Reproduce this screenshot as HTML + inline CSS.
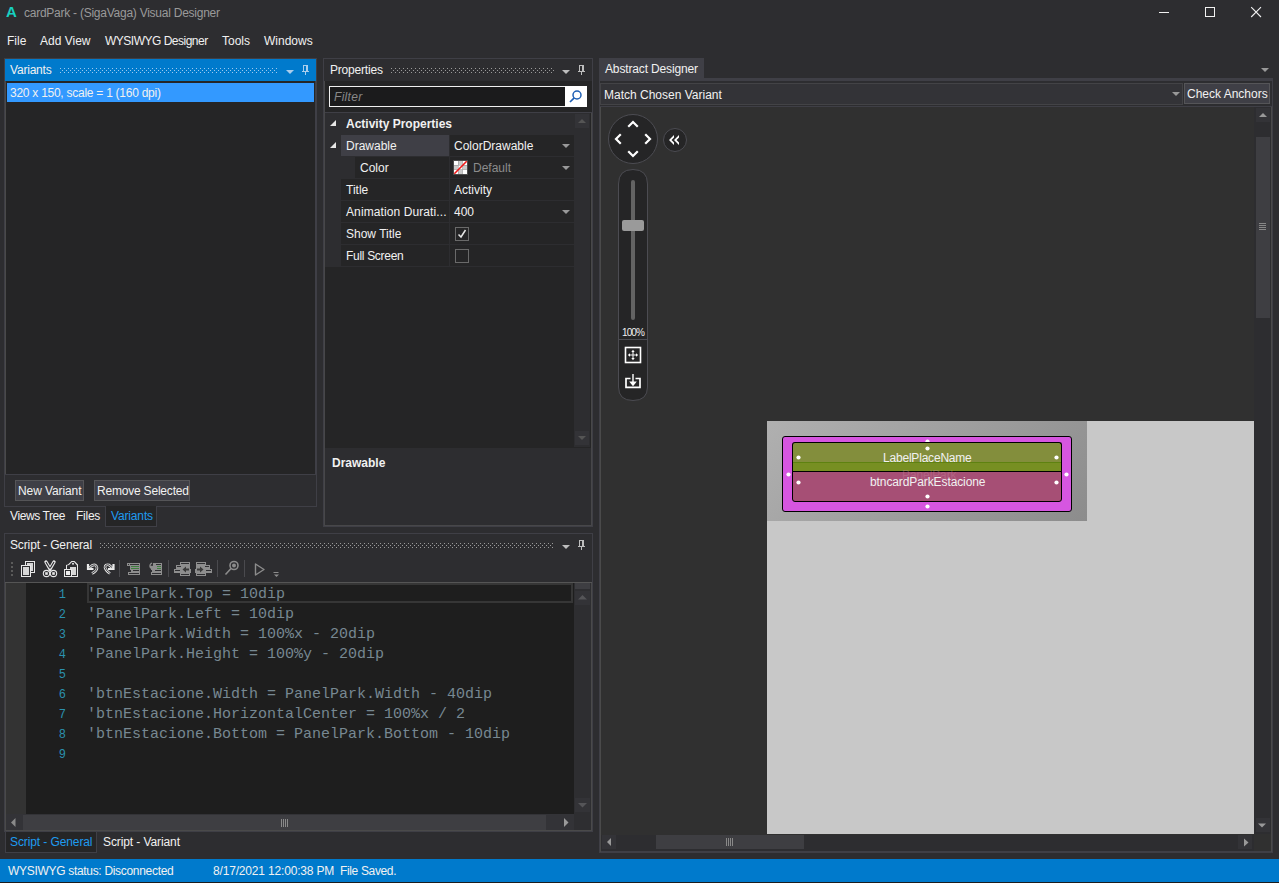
<!DOCTYPE html>
<html><head><meta charset="utf-8">
<style>
*{margin:0;padding:0;box-sizing:border-box}
html,body{width:1279px;height:883px;overflow:hidden;background:#2d2d30}
body{position:relative;font-family:"Liberation Sans",sans-serif;font-size:12px;color:#f1f1f1;line-height:14px}
.a{position:absolute}
.t{position:absolute;white-space:nowrap;line-height:14px}
.grip{position:absolute;height:5px;background-image:radial-gradient(circle at 1px 1px,rgba(160,160,160,.55) 0.7px,transparent 0.8px);background-size:4px 4px}
.bd{border:1px solid #3f3f46}
</style></head><body>

<!-- ===== TITLE BAR ===== -->
<div class="t" style="left:6px;top:3px;font-size:15px;font-weight:bold;color:#18d0c0;line-height:17px">A</div>
<div class="t" style="left:24px;top:6px;color:#9a9a9a;letter-spacing:-0.25px">cardPark - (SigaVaga) Visual Designer</div>
<div class="a" style="left:1159px;top:12px;width:10px;height:1px;background:#f1f1f1"></div>
<div class="a" style="left:1205px;top:7px;width:10px;height:10px;border:1px solid #f1f1f1"></div>
<svg class="a" style="left:1250px;top:6px" width="13" height="13"><path d="M1.2 1.2L11 11M11 1.2L1.2 11" stroke="#f1f1f1" stroke-width="1.1"/></svg>

<!-- ===== MENU ===== -->
<div class="t" style="left:7px;top:34px">File</div>
<div class="t" style="left:40px;top:34px">Add View</div>
<div class="t" style="left:105px;top:34px;letter-spacing:-0.5px">WYSIWYG Designer</div>
<div class="t" style="left:222px;top:34px">Tools</div>
<div class="t" style="left:264px;top:34px">Windows</div>

<!-- ===== VARIANTS PANEL ===== -->
<div class="a" style="left:4px;top:58px;width:313px;height:449px;border:1px solid #3f3f46;background:#2d2d30"></div>
<div class="a" style="left:5px;top:59px;width:311px;height:22px;background:#007acc"></div>
<div class="t" style="left:10px;top:63px;letter-spacing:-0.2px">Variants</div>
<svg class="a" style="left:60px;top:68px" width="217" height="5" shape-rendering="crispEdges"><defs><pattern id="g60_68" width="4" height="4" patternUnits="userSpaceOnUse"><rect x="0" y="0" width="1" height="1" fill="#9dc9ee"/><rect x="2" y="2" width="1" height="1" fill="#9dc9ee"/></pattern></defs><rect width="217" height="5" fill="url(#g60_68)"/></svg>
<svg class="a" style="left:286px;top:70px" width="8" height="4"><path d="M0 0H8L4 4Z" fill="#a9cdec"/></svg>
<svg class="a" style="left:302px;top:65px" width="8" height="11" shape-rendering="crispEdges" fill="#a9cdec"><rect x="1" y="0" width="1" height="7"/><rect x="4" y="0" width="2" height="7"/><rect x="1" y="0" width="5" height="1"/><rect x="0" y="6" width="7" height="1"/><rect x="3" y="7" width="1" height="3"/></svg>
<div class="a" style="left:5px;top:81px;width:311px;height:393px;background:#252526;border:1px solid #3f3f46;border-top:none;border-bottom:none"></div>
<div class="a" style="left:7px;top:83px;width:307px;height:19px;background:#3399ff"></div>
<div class="t" style="left:10px;top:86px;letter-spacing:-0.26px">320 x 150, scale = 1 (160 dpi)</div>
<div class="a" style="left:4px;top:474px;width:313px;height:33px;border:1px solid #3f3f46;border-top:1px solid #3f3f46"></div>
<div class="a" style="left:15px;top:480px;width:69px;height:21px;background:#3f3f46;border:1px solid #555558"></div>
<div class="t" style="left:18px;top:484px;letter-spacing:-0.1px">New Variant</div>
<div class="a" style="left:94px;top:480px;width:96px;height:21px;background:#3f3f46;border:1px solid #555558"></div>
<div class="t" style="left:97px;top:484px;letter-spacing:-0.2px">Remove Selected</div>
<!-- tabs -->
<div class="a" style="left:105px;top:506px;width:52px;height:21px;background:#252526;border:1px solid #3f3f46;border-top:none"></div>
<div class="t" style="left:10px;top:509px;letter-spacing:-0.4px">Views Tree</div>
<div class="t" style="left:76px;top:509px;letter-spacing:-0.25px">Files</div>
<div class="t" style="left:111px;top:509px;color:#1e9bf0;letter-spacing:-0.15px">Variants</div>

<!-- ===== PROPERTIES PANEL ===== -->
<div class="a" style="left:323px;top:58px;width:270px;height:469px;border:1px solid #3f3f46"></div>
<div class="t" style="left:330px;top:63px;letter-spacing:-0.2px">Properties</div>
<svg class="a" style="left:391px;top:68px" width="163" height="5" shape-rendering="crispEdges"><defs><pattern id="g391_68" width="4" height="4" patternUnits="userSpaceOnUse"><rect x="0" y="0" width="1" height="1" fill="#9a9a9a"/><rect x="2" y="2" width="1" height="1" fill="#9a9a9a"/></pattern></defs><rect width="163" height="5" fill="url(#g391_68)"/></svg>
<svg class="a" style="left:562px;top:70px" width="8" height="4"><path d="M0 0H8L4 4Z" fill="#bdbdbd"/></svg>
<svg class="a" style="left:578px;top:65px" width="8" height="11" shape-rendering="crispEdges" fill="#bdbdbd"><rect x="1" y="0" width="1" height="7"/><rect x="4" y="0" width="2" height="7"/><rect x="1" y="0" width="5" height="1"/><rect x="0" y="6" width="7" height="1"/><rect x="3" y="7" width="1" height="3"/></svg>
<div class="a" style="left:324px;top:81px;width:268px;height:31px;background:#252526"></div>
<div class="a" style="left:329px;top:86px;width:258px;height:21px;background:#1b1b1c;border:1px solid #f0f0f0"></div>
<div class="a" style="left:565px;top:86px;width:22px;height:21px;background:#fff"></div>
<svg class="a" style="left:567px;top:88px" width="18" height="17"><circle cx="10" cy="7" r="4" fill="none" stroke="#1e5fb4" stroke-width="1.5"/><path d="M7.2 9.8L3 14" stroke="#1e5fb4" stroke-width="1.7"/></svg>
<div class="t" style="left:334px;top:90px;font-style:italic;color:#888;letter-spacing:0.3px">Filter</div>
<!-- property grid -->
<div class="a" style="left:324px;top:112px;width:268px;height:336px;background:#252526;border-top:1px solid #3f3f46"></div>
<div class="a" style="left:325px;top:113px;width:249px;height:154px;background:#2d2d30"></div>
<div class="a" style="left:324px;top:112px;width:1px;height:336px;background:#4a4a4a"></div>
<div class="a" style="left:574px;top:113px;width:16px;height:334px;background:#2d2d30"></div>
<div class="a" style="left:575px;top:114px;width:14px;height:14px;background:#333337"></div>
<svg class="a" style="left:577px;top:118px" width="10" height="6"><path d="M1 5H9L5 1Z" fill="#555"/></svg>
<div class="a" style="left:575px;top:431px;width:14px;height:14px;background:#333337"></div>
<svg class="a" style="left:577px;top:435px" width="10" height="6"><path d="M1 1H9L5 5Z" fill="#555"/></svg>
<svg class="a" style="left:330px;top:120px" width="7" height="7"><path d="M6 0V6H0Z" fill="#e6e6e6"/></svg>
<div class="t" style="left:346px;top:117px;font-weight:bold">Activity Properties</div>
<!-- rows -->
<div class="a" style="left:341px;top:135px;width:108px;height:21px;background:#3f3f46"></div>
<div class="a" style="left:450px;top:135px;width:124px;height:21px;background:#252526"></div>
<svg class="a" style="left:330px;top:142px" width="7" height="7"><path d="M6 0V6H0Z" fill="#e6e6e6"/></svg>
<div class="t" style="left:346px;top:139px">Drawable</div>
<div class="t" style="left:454px;top:139px">ColorDrawable</div>
<svg class="a" style="left:561px;top:143px" width="10" height="6"><path d="M1 1H9L5 5Z" fill="#999"/></svg>

<div class="a" style="left:355px;top:157px;width:94px;height:21px;background:#252526"></div>
<div class="a" style="left:450px;top:157px;width:124px;height:21px;background:#252526"></div>
<div class="t" style="left:360px;top:161px">Color</div>
<svg class="a" style="left:453px;top:160px" width="15" height="15"><rect x="0.5" y="0.5" width="14" height="14" fill="none" stroke="#4a4a4a"/><rect x="1.00" y="1.00" width="4.34" height="4.34" fill="#fff"/><rect x="5.33" y="1.00" width="4.34" height="4.34" fill="#cbcbcb"/><rect x="9.67" y="1.00" width="4.34" height="4.34" fill="#fff"/><rect x="1.00" y="5.33" width="4.34" height="4.34" fill="#cbcbcb"/><rect x="5.33" y="5.33" width="4.34" height="4.34" fill="#fff"/><rect x="9.67" y="5.33" width="4.34" height="4.34" fill="#cbcbcb"/><rect x="1.00" y="9.67" width="4.34" height="4.34" fill="#fff"/><rect x="5.33" y="9.67" width="4.34" height="4.34" fill="#cbcbcb"/><rect x="9.67" y="9.67" width="4.34" height="4.34" fill="#fff"/><path d="M1.3 13.7L13.7 1.3" stroke="#f01818" stroke-width="1.6"/></svg>
<div class="t" style="left:473px;top:161px;color:#8c8c8c">Default</div>
<svg class="a" style="left:561px;top:165px" width="10" height="6"><path d="M1 1H9L5 5Z" fill="#999"/></svg>

<div class="a" style="left:341px;top:179px;width:108px;height:21px;background:#252526"></div>
<div class="a" style="left:450px;top:179px;width:124px;height:21px;background:#252526"></div>
<div class="t" style="left:346px;top:183px">Title</div>
<div class="t" style="left:454px;top:183px">Activity</div>

<div class="a" style="left:341px;top:201px;width:108px;height:21px;background:#252526"></div>
<div class="a" style="left:450px;top:201px;width:124px;height:21px;background:#252526"></div>
<div class="t" style="left:346px;top:205px;letter-spacing:0.1px">Animation Durati...</div>
<div class="t" style="left:454px;top:205px">400</div>
<svg class="a" style="left:561px;top:209px" width="10" height="6"><path d="M1 1H9L5 5Z" fill="#999"/></svg>

<div class="a" style="left:341px;top:223px;width:108px;height:21px;background:#252526"></div>
<div class="a" style="left:450px;top:223px;width:124px;height:21px;background:#252526"></div>
<div class="t" style="left:346px;top:227px">Show Title</div>
<div class="a" style="left:455px;top:227px;width:14px;height:14px;border:1px solid #6a6a6a"></div>
<svg class="a" style="left:455px;top:227px" width="14" height="14"><path d="M3.5 7.5L6 10L10.5 3" fill="none" stroke="#e6e6e6" stroke-width="1.5"/></svg>

<div class="a" style="left:341px;top:245px;width:108px;height:21px;background:#252526"></div>
<div class="a" style="left:450px;top:245px;width:124px;height:21px;background:#252526"></div>
<div class="t" style="left:346px;top:249px;letter-spacing:-0.3px">Full Screen</div>
<div class="a" style="left:455px;top:249px;width:14px;height:14px;border:1px solid #6a6a6a"></div>
<!-- description -->
<div class="a" style="left:324px;top:448px;width:268px;height:78px;background:#2d2d30"></div>
<div class="t" style="left:332px;top:456px;font-weight:bold">Drawable</div>

<!-- ===== SCRIPT PANEL ===== -->
<div class="a" style="left:4px;top:533px;width:589px;height:299px;border:1px solid #3f3f46"></div>
<div class="t" style="left:10px;top:538px;letter-spacing:-0.13px">Script - General</div>
<svg class="a" style="left:100px;top:543px" width="454" height="5" shape-rendering="crispEdges"><defs><pattern id="g100_543" width="4" height="4" patternUnits="userSpaceOnUse"><rect x="0" y="0" width="1" height="1" fill="#9a9a9a"/><rect x="2" y="2" width="1" height="1" fill="#9a9a9a"/></pattern></defs><rect width="454" height="5" fill="url(#g100_543)"/></svg>
<svg class="a" style="left:562px;top:545px" width="8" height="4"><path d="M0 0H8L4 4Z" fill="#bdbdbd"/></svg>
<svg class="a" style="left:578px;top:540px" width="8" height="11" shape-rendering="crispEdges" fill="#bdbdbd"><rect x="1" y="0" width="1" height="7"/><rect x="4" y="0" width="2" height="7"/><rect x="1" y="0" width="5" height="1"/><rect x="0" y="6" width="7" height="1"/><rect x="3" y="7" width="1" height="3"/></svg>
<svg class="a" style="left:0;top:555px" width="290" height="27">
<g fill="#5a5a5a" shape-rendering="crispEdges"><rect x="11" y="7" width="2" height="2"/><rect x="11" y="11" width="2" height="2"/><rect x="11" y="15" width="2" height="2"/><rect x="11" y="19" width="2" height="2"/></g>
<g shape-rendering="crispEdges">
<rect x="25" y="6" width="10" height="12" fill="#e8e8e8"/><rect x="26" y="7" width="8" height="10" fill="#2d2d30"/><rect x="27" y="8" width="6" height="8" fill="#d6d6d6"/>
<rect x="21" y="10" width="10" height="12" fill="#e8e8e8"/><rect x="22" y="11" width="8" height="10" fill="#2d2d30"/><rect x="23" y="12" width="6" height="8" fill="#d6d6d6"/>
<rect x="119" y="5" width="1" height="17" fill="#4a4a4e"/><rect x="168" y="5" width="1" height="17" fill="#4a4a4e"/><rect x="217" y="5" width="1" height="17" fill="#4a4a4e"/><rect x="244" y="5" width="1" height="17" fill="#4a4a4e"/>
</g>
<path d="M66 22V10L68 9.5L71.5 6H74.5L78 9.5V22Z" fill="#e8e8e8"/>
<path d="M67 21V10.5L69 10L72 7H74L77 10.5V21Z" fill="#2d2d30"/>
<path d="M70 20V12H76V20Z" fill="#d6d6d6"/>
<circle cx="73" cy="8.8" r="1" fill="#e8e8e8"/>
<g shape-rendering="crispEdges"><rect x="64" y="14" width="8" height="8" fill="#e8e8e8"/><rect x="65" y="15" width="6" height="6" fill="#2d2d30"/><rect x="66" y="16" width="4" height="4" fill="#eeeeee"/></g>
<g fill="none" stroke-linecap="round">
<path d="M46 7L50 14M54 7L50 14" stroke="#e8e8e8" stroke-width="3.4"/>
<path d="M46.2 7.4L49.6 13M53.8 7.4L50.4 13" stroke="#2d2d30" stroke-width="1.1"/>
</g>
<circle cx="46.5" cy="18.5" r="3.7" fill="#e8e8e8"/><circle cx="53.5" cy="18.5" r="3.7" fill="#e8e8e8"/>
<circle cx="46.5" cy="18.5" r="2.6" fill="#2d2d30"/><circle cx="53.5" cy="18.5" r="2.6" fill="#2d2d30"/>
<rect x="45.2" y="17.2" width="2.6" height="2.6" fill="#e8e8e8"/><rect x="52.2" y="17.2" width="2.6" height="2.6" fill="#e8e8e8"/><rect x="49" y="14" width="2" height="2" fill="#e8e8e8"/>
<g fill="none">
<path d="M88 9V14H93.5" stroke="#ececec" stroke-width="2.2"/>
<path d="M88.5 13.5L92 10.5Q96.5 8.5 97 13Q97 16 92 18.5" stroke="#e0e0e0" stroke-width="2.6"/>
<path d="M89.5 12.5L92 10.5Q96.5 8.5 97 13Q97 16 92 18.5" stroke="#2d2d30" stroke-width="0.9"/>
<path d="M113.5 9V14H108" stroke="#ececec" stroke-width="2.2"/>
<path d="M113 13.5L109 10Q105 9 105 12.5Q105.5 15.5 110 18.5" stroke="#e0e0e0" stroke-width="2.6"/>
<path d="M112 12.5L109 10Q105 9 105 12.5Q105.5 15.5 110 18.5" stroke="#2d2d30" stroke-width="0.9"/>
</g>
<g shape-rendering="crispEdges"><rect x="127" y="8" width="13" height="3" fill="#8e8e8e"/><rect x="128" y="9" width="1" height="1" fill="#2f2f32"/><rect x="130" y="9" width="9" height="1" fill="#2f2f32"/><rect x="130" y="11" width="10" height="4" fill="#8e8e8e"/><rect x="131" y="11" width="8" height="1" fill="#3f7f3f"/><rect x="131" y="13" width="8" height="1" fill="#3f7f3f"/><rect x="131" y="15" width="9" height="2" fill="#8e8e8e"/><rect x="133" y="15" width="6" height="1" fill="#2f2f32"/><rect x="128" y="17" width="12" height="3" fill="#8e8e8e"/><rect x="129" y="18" width="10" height="1" fill="#2f2f32"/><rect x="153" y="8" width="9" height="3" fill="#8e8e8e"/><rect x="156" y="9" width="5" height="1" fill="#2f2f32"/><rect x="151" y="11" width="11" height="4" fill="#8e8e8e"/><rect x="157" y="11" width="4" height="1" fill="#3f7f3f"/><rect x="157" y="13" width="4" height="1" fill="#3f7f3f"/><rect x="152" y="15" width="10" height="2" fill="#8e8e8e"/><rect x="155" y="15" width="6" height="1" fill="#2f2f32"/><rect x="151" y="17" width="11" height="3" fill="#8e8e8e"/><rect x="152" y="18" width="9" height="1" fill="#2f2f32"/><rect x="180" y="7" width="10" height="14" fill="#8e8e8e"/><rect x="181" y="8" width="8" height="1" fill="#2f2f32"/><rect x="181" y="19" width="8" height="1" fill="#2f2f32"/><rect x="176" y="10" width="6" height="4" fill="#8e8e8e"/><rect x="177" y="11" width="4" height="1" fill="#2f2f32"/><rect x="174" y="14" width="8" height="4" fill="#8e8e8e"/><rect x="175" y="15" width="5" height="1" fill="#2f2f32"/><rect x="188" y="14" width="3" height="4" fill="#8e8e8e"/><rect x="196" y="7" width="10" height="14" fill="#8e8e8e"/><rect x="197" y="8" width="8" height="1" fill="#2f2f32"/><rect x="197" y="19" width="8" height="1" fill="#2f2f32"/><rect x="204" y="10" width="6" height="4" fill="#8e8e8e"/><rect x="205" y="11" width="4" height="1" fill="#2f2f32"/><rect x="204" y="14" width="8" height="4" fill="#8e8e8e"/><rect x="206" y="15" width="5" height="1" fill="#2f2f32"/><rect x="195" y="14" width="3" height="4" fill="#8e8e8e"/></g><path d="M182.5 14.5L186 11.5V13.5H189V15.5H186V17.5Z" fill="#3a3a3a"/><path d="M203.5 14.5L200 11.5V13.5H197V15.5H200V17.5Z" fill="#3a3a3a"/><path d="M152 8Q149.5 9 150 12L152 14.5M150 12L152.5 11" fill="none" stroke="#8e8e8e" stroke-width="1.2"/>
<g fill="none" stroke="#8c8c8c" stroke-width="1.6"><circle cx="234" cy="10.5" r="4"/><path d="M231 13.5L225.5 19.5"/></g><circle cx="234" cy="10.5" r="2" fill="#8c8c8c"/>
<path d="M255.5 9V20L264 14.5Z" fill="none" stroke="#8c8c8c" stroke-width="1.4" stroke-linejoin="round"/><path d="M273.5 17.5H278.5" stroke="#8c8c8c" stroke-width="1"/><path d="M274 19.5H279L276.5 22Z" fill="#8c8c8c"/>
</svg>
<!-- editor -->
<div class="a" style="left:5px;top:582px;width:587px;height:249px;background:#1e1e1e;border-top:1px solid #555"></div>
<div class="a" style="left:6px;top:583px;width:20px;height:231px;background:#333333"></div>
<div class="a" style="left:87px;top:583px;width:486px;height:20px;border:2px solid #363636"></div>
<div class="a" style="left:574px;top:583px;width:17px;height:248px;background:#2e2e31"></div>
<div class="a" style="left:575px;top:583px;width:15px;height:6px;background:#3e3e42"></div>
<div class="a" style="left:575px;top:591px;width:15px;height:14px;background:#333337"></div>
<svg class="a" style="left:578px;top:595px" width="9" height="5"><path d="M0 4.5H9L4.5 0Z" fill="#555558"/></svg>
<div class="a" style="left:575px;top:798px;width:15px;height:14px;background:#333337"></div>
<svg class="a" style="left:578px;top:803px" width="9" height="5"><path d="M0 0H9L4.5 4.5Z" fill="#555558"/></svg>
<div class="a" style="left:6px;top:814px;width:568px;height:17px;background:#333337"></div>
<div class="a" style="left:23px;top:815px;width:523px;height:15px;background:#3e3e42"></div>
<svg class="a" style="left:11px;top:818px" width="5" height="9"><path d="M4.5 0V9L0 4.5Z" fill="#8a8a8a"/></svg>
<svg class="a" style="left:564px;top:818px" width="5" height="9"><path d="M0 0V9L4.5 4.5Z" fill="#9a9a9a"/></svg>
<div class="a" style="left:281px;top:819px;width:8px;height:8px;background:repeating-linear-gradient(90deg,#8a8a8a 0 1px,transparent 1px 2px)"></div>

<div class="a" style="left:26px;top:582px;width:40px;font-family:'Liberation Mono',monospace;font-size:12px;line-height:20px;color:#2b91af;text-align:right;padding-top:3px">1<br>2<br>3<br>4<br>5<br>6<br>7<br>8<br>9</div>
<div class="a" style="left:87px;top:584px;font-family:'Liberation Mono',monospace;font-size:15px;line-height:20px;color:#778892;white-space:pre;padding-top:1px">'PanelPark.Top = 10dip
'PanelPark.Left = 10dip
'PanelPark.Width = 100%x - 20dip
'PanelPark.Height = 100%y - 20dip

'btnEstacione.Width = PanelPark.Width - 40dip
'btnEstacione.HorizontalCenter = 100%x / 2
'btnEstacione.Bottom = PanelPark.Bottom - 10dip
</div>

<!-- ===== SCRIPT TABS ===== -->
<div class="a" style="left:5px;top:832px;width:92px;height:21px;background:#252526;border:1px solid #3f3f46;border-top:none"></div>
<div class="t" style="left:10px;top:835px;color:#1e9bf0;letter-spacing:-0.1px">Script - General</div>
<div class="t" style="left:103px;top:835px;letter-spacing:-0.1px">Script - Variant</div>

<!-- ===== ABSTRACT DESIGNER ===== -->
<div class="a" style="left:599px;top:58px;width:105px;height:23px;background:#3f3f46"></div>
<div class="a" style="left:599px;top:78px;width:674px;height:3px;background:#3f3f46"></div>
<div class="t" style="left:605px;top:62px;letter-spacing:-0.15px">Abstract Designer</div>
<svg class="a" style="left:1260px;top:67px" width="10" height="6"><path d="M1 1H9L5 5Z" fill="#999"/></svg>
<div class="a" style="left:599px;top:81px;width:674px;height:772px;border:1px solid #3f3f46;border-top:none"></div>
<!-- combo -->
<div class="a" style="left:600px;top:83px;width:583px;height:22px;background:#333337;border:1px solid #434346"></div>
<div class="t" style="left:604px;top:88px">Match Chosen Variant</div>
<svg class="a" style="left:1171px;top:91px" width="10" height="6"><path d="M1 1H9L5 5Z" fill="#999"/></svg>
<div class="a" style="left:1184px;top:83px;width:86px;height:21px;background:#3f3f46;border:1px solid #555558"></div>
<div class="t" style="left:1187px;top:87px">Check Anchors</div>
<!-- designer area -->
<div class="a" style="left:600px;top:106px;width:672px;height:746px;background:#303030;border:1px solid #3f3f46"></div>
<!-- v scrollbar -->
<div class="a" style="left:1254px;top:107px;width:17px;height:727px;background:#2d2d30"></div>
<div class="a" style="left:1256px;top:108px;width:14px;height:14px;background:#333337"></div>
<svg class="a" style="left:1258px;top:112px" width="10" height="6"><path d="M1 5H9L5 1Z" fill="#999"/></svg>
<div class="a" style="left:1256px;top:137px;width:14px;height:181px;background:#3e3e42"></div>
<div class="a" style="left:1271px;top:107px;width:1px;height:745px;background:#4a4a4a"></div>
<div class="a" style="left:1259px;top:223px;width:7px;height:7px;background:repeating-linear-gradient(#888 0 1px,transparent 1px 2px)"></div>
<div class="a" style="left:1256px;top:818px;width:14px;height:14px;background:#333337"></div>
<svg class="a" style="left:1258px;top:823px" width="9" height="5"><path d="M0 0.5H8L4 4.5Z" fill="#999"/></svg>
<!-- h scrollbar -->
<div class="a" style="left:601px;top:835px;width:653px;height:16px;background:#2d2d30"></div>
<div class="a" style="left:602px;top:835px;width:14px;height:14px;background:#333337"></div>
<svg class="a" style="left:606px;top:837px" width="6" height="10"><path d="M5 1V9L1 5Z" fill="#999"/></svg>
<div class="a" style="left:656px;top:835px;width:148px;height:14px;background:#3e3e42"></div>
<div class="a" style="left:726px;top:838px;width:8px;height:8px;background:repeating-linear-gradient(90deg,#888 0 1px,transparent 1px 2px)"></div>
<div class="a" style="left:1238px;top:835px;width:14px;height:14px;background:#333337"></div>
<svg class="a" style="left:1244px;top:838px" width="5" height="9"><path d="M0 0.5V8.5L4.5 4.5Z" fill="#999"/></svg>
<!-- canvas -->
<div class="a" style="left:767px;top:421px;width:487px;height:413px;background:#c8c8c8"></div>
<div class="a" style="left:767px;top:421px;width:320px;height:100px;background:linear-gradient(135deg,#b0b0b0,#8c8c8c)"></div>
<div class="a" style="left:782px;top:436px;width:290px;height:76px;background:#d656e0;border:1px solid #000;border-radius:3px"></div>
<svg class="a" style="left:780px;top:434px" width="300" height="80"><g fill="#fff">
<circle cx="147.5" cy="7.5" r="2.1"/><circle cx="8.5" cy="40.5" r="2.1"/><circle cx="286.5" cy="40.5" r="2.1"/><circle cx="147.5" cy="72.5" r="2.1"/></g></svg>
<div class="a" style="left:792px;top:442px;width:270px;height:30px;background:#838e3c;border:1px solid #000;border-bottom:none;border-radius:3px 3px 0 0"></div>
<div class="a" style="left:793px;top:462px;width:268px;height:9px;background:#778f22;border-top:1px solid #5e8210"></div>
<div class="a" style="left:792px;top:471px;width:270px;height:31px;background:#a64f75;border:1px solid #000;border-radius:0 0 3px 3px"></div>
<div class="t" style="left:902px;top:468px;color:rgba(205,140,160,.35);letter-spacing:-0.1px">PanelPark</div>
<div class="t" style="left:883px;top:451px;letter-spacing:-0.2px">LabelPlaceName</div>
<div class="t" style="left:870px;top:475px;letter-spacing:-0.1px">btncardParkEstacione</div>
<svg class="a" style="left:780px;top:434px" width="300" height="80"><g fill="#fff">
<circle cx="147.5" cy="14.5" r="2.1"/><circle cx="18.5" cy="23.5" r="2.1"/><circle cx="276.5" cy="23.5" r="2.1"/>
<circle cx="18.5" cy="48.5" r="2.1"/><circle cx="276.5" cy="48.5" r="2.1"/><circle cx="147.5" cy="62.5" r="2.1"/>
</g></svg>
<!-- nav control -->
<svg class="a" style="left:600px;top:107px" width="100" height="300">
<circle cx="33" cy="32" r="24.5" fill="#252526" stroke="#4c4c52" stroke-width="1"/>
<g fill="none" stroke="#fff" stroke-width="2.2" stroke-linecap="square">
<path d="M29 19L33 15L37 19"/><path d="M29 45L33 49L37 45"/><path d="M20 28L16 32L20 36"/><path d="M46 28L50 32L46 36"/>
</g>
<circle cx="75" cy="33" r="11.5" fill="#252526" stroke="#4c4c52" stroke-width="1"/>
<g fill="#fff"><path d="M69 33L74 28V30.5L71.5 33L74 35.5V38Z"/><path d="M74 33L79 28V30.5L76.5 33L79 35.5V38Z"/></g>
<path d="M18.5 77Q18.5 62.5 33 62.5Q47.5 62.5 47.5 77V280Q47.5 293.5 33 293.5Q18.5 293.5 18.5 280Z" fill="#252526" stroke="#4c4c52"/>
<rect x="31" y="73" width="4" height="140" rx="2" fill="#636363"/>
<rect x="22" y="113" width="22" height="11" rx="2" fill="#9a9a9a"/>
<line x1="18.5" y1="232.5" x2="47.5" y2="232.5" stroke="#4c4c52"/>
<rect x="25.5" y="240.5" width="15" height="15" fill="none" stroke="#fff" stroke-width="1.6"/>
<path d="M33 244V252M29 248H37" stroke="#eee" stroke-width="1.1"/><path d="M31.3 245L33 242.8L34.7 245ZM31.3 251L33 253.2L34.7 251ZM30 246.3L27.8 248L30 249.7ZM36 246.3L38.2 248L36 249.7Z" fill="#fff"/>
<path d="M30.5 271.5H26V280.3H40V271.5H35.5" fill="none" stroke="#fff" stroke-width="1.7"/><path d="M33 267V276" stroke="#fff" stroke-width="1.4"/><path d="M29.2 274.5H36.8L33 279.2Z" fill="#fff"/>
</svg>
<div class="t" style="left:622px;top:326px;font-size:10px;color:#f0f0f0;letter-spacing:-0.9px">100%</div>

<!-- inner light borders -->
<div class="a" style="left:324px;top:81px;width:1px;height:445px;background:#474749"></div>
<div class="a" style="left:324px;top:525px;width:268px;height:1px;background:#474749"></div>
<div class="a" style="left:591px;top:448px;width:1px;height:78px;background:#474749"></div>
<div class="a" style="left:5px;top:583px;width:1px;height:248px;background:#4a4a4a"></div>
<div class="a" style="left:5px;top:830px;width:587px;height:1px;background:#4a4a4a"></div>
<div class="a" style="left:591px;top:583px;width:1px;height:248px;background:#4a4a4a"></div>
<div class="a" style="left:5px;top:82px;width:1px;height:392px;background:#4a4a4a"></div>
<div class="a" style="left:591px;top:113px;width:1px;height:335px;background:#484848"></div>
<div class="a" style="left:600px;top:107px;width:1px;height:745px;background:#4a4a4a"></div>
<!-- ===== STATUS BAR ===== -->
<div class="a" style="left:0;top:882px;width:1279px;height:1px;background:#1c1c1c"></div>
<div class="a" style="left:0;top:859px;width:1279px;height:23px;background:#007acc"></div>
<div class="t" style="left:8px;top:864px;letter-spacing:-0.31px">WYSIWYG status: Disconnected</div>
<div class="t" style="left:213px;top:864px;letter-spacing:-0.17px">8/17/2021 12:00:38 PM</div>
<div class="t" style="left:340px;top:864px;letter-spacing:-0.35px">File Saved.</div>

</body></html>
